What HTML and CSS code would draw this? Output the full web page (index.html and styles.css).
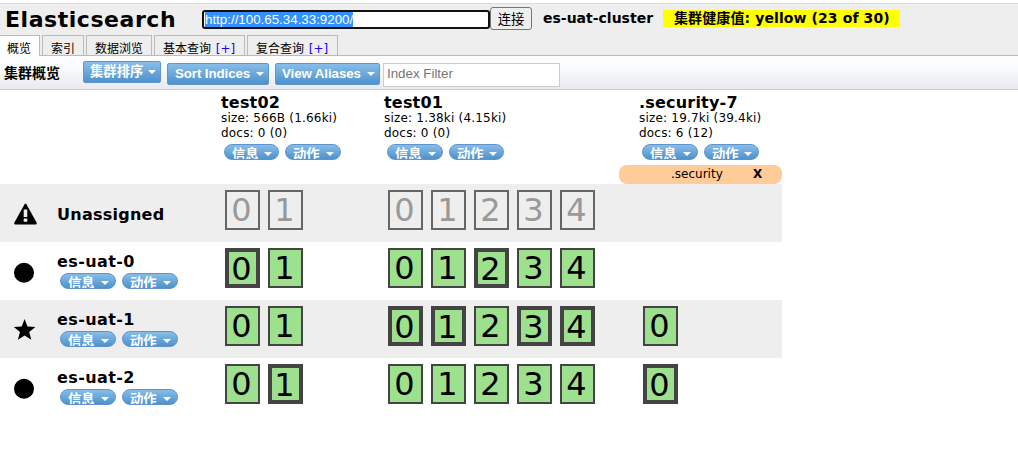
FILE: index.html
```html
<!DOCTYPE html>
<html lang="zh">
<head>
<meta charset="utf-8">
<title>Elasticsearch</title>
<link rel="stylesheet" href="styles.css">
</head>
<body>
<header class="header">
  <div class="top">
    <h1 class="title">Elasticsearch</h1>
    <div class="uri"><span class="selected">http://100.65.34.33:9200/</span></div>
    <button class="connect">连接</button>
    <span class="cluster">es-uat-cluster</span>
    <span class="health">集群健康值: yellow (23 of 30)</span>
  </div>
  <nav class="tabs">
    <div class="tab active w40">概览</div>
    <div class="tab w42">索引</div>
    <div class="tab w66">数据浏览</div>
    <div class="tab w91">基本查询 <span class="add">[+]</span></div>
    <div class="tab w91">复合查询 <span class="add">[+]</span></div>
  </nav>
</header>
<div class="toolbar">
  <span class="heading">集群概览</span>
  <button class="btn sort">集群排序<i class="arrow"></i></button>
  <button class="btn indices">Sort Indices<i class="arrow"></i></button>
  <button class="btn aliases">View Aliases<i class="arrow"></i></button>
  <input class="filter" placeholder="Index Filter">
</div>
<main class="grid">
  <div class="row heads">
    <div class="node"></div>
    <div class="index a"><h2>test02</h2><p>size: 566B (1.66ki)</p><p>docs: 0 (0)</p>
      <div class="pills"><span class="pill narrow">信息<i class="arrow"></i></span><span class="pill">动作<i class="arrow"></i></span></div></div>
    <div class="index b"><h2>test01</h2><p>size: 1.38ki (4.15ki)</p><p>docs: 0 (0)</p>
      <div class="pills"><span class="pill">信息<i class="arrow"></i></span><span class="pill narrow">动作<i class="arrow"></i></span></div></div>
    <div class="index c"><h2>.security-7</h2><p>size: 19.7ki (39.4ki)</p><p>docs: 6 (12)</p>
      <div class="pills"><span class="pill">信息<i class="arrow"></i></span><span class="pill narrow">动作<i class="arrow"></i></span></div>
      <div class="alias"><span>.security</span><b>X</b></div></div>
  </div>
  <div class="row shade">
    <div class="node"><svg class="icon" viewBox="0 0 24 24"><path d="M11.6 1.2Q12.5 -.2 13.4 1.2L23.6 19.6Q24.2 21.6 22.6 21.6H2.4Q.8 21.6 1.4 19.6Z"/><path class="cut" d="M10.7 6.5h3.6v7.4h-3.6zM10.7 15.6h3.6v3.2h-3.6z"/></svg><div class="name">Unassigned</div></div>
    <div class="shards a"><b class="shard un">0</b><b class="shard un">1</b></div>
    <div class="shards b"><b class="shard un">0</b><b class="shard un">1</b><b class="shard un">2</b><b class="shard un">3</b><b class="shard un">4</b></div>
    <div class="shards c"></div>
  </div>
  <div class="row">
    <div class="node"><svg class="icon" viewBox="0 0 24 24"><circle cx="11" cy="11.8" r="10"/></svg>
      <div class="info"><div class="name">es-uat-0</div><div class="pills"><span class="pill">信息<i class="arrow"></i></span><span class="pill">动作<i class="arrow"></i></span></div></div></div>
    <div class="shards a"><b class="shard primary">0</b><b class="shard">1</b></div>
    <div class="shards b"><b class="shard">0</b><b class="shard">1</b><b class="shard primary">2</b><b class="shard">3</b><b class="shard">4</b></div>
    <div class="shards c"></div>
  </div>
  <div class="row shade">
    <div class="node"><svg class="icon" viewBox="0 0 24 24"><path d="M11.6 0 14.5 7.4 22.4 8 16.2 13 18.3 20.7 11.6 16.4 4.9 20.7 7 13 .8 8 8.7 7.4Z"/></svg>
      <div class="info"><div class="name">es-uat-1</div><div class="pills"><span class="pill">信息<i class="arrow"></i></span><span class="pill">动作<i class="arrow"></i></span></div></div></div>
    <div class="shards a"><b class="shard">0</b><b class="shard">1</b></div>
    <div class="shards b"><b class="shard primary">0</b><b class="shard primary">1</b><b class="shard">2</b><b class="shard primary">3</b><b class="shard primary">4</b></div>
    <div class="shards c"><b class="shard">0</b></div>
  </div>
  <div class="row">
    <div class="node"><svg class="icon" viewBox="0 0 24 24"><circle cx="11" cy="11.8" r="10"/></svg>
      <div class="info"><div class="name">es-uat-2</div><div class="pills"><span class="pill">信息<i class="arrow"></i></span><span class="pill">动作<i class="arrow"></i></span></div></div></div>
    <div class="shards a"><b class="shard">0</b><b class="shard primary">1</b></div>
    <div class="shards b"><b class="shard">0</b><b class="shard">1</b><b class="shard">2</b><b class="shard">3</b><b class="shard">4</b></div>
    <div class="shards c"><b class="shard primary">0</b></div>
  </div>
</main>
</body>
</html>
```
FILE: styles.css
```css
* { box-sizing: border-box; }
body { margin: 0; padding-top: 3px; background: #fff; color: #000; font: 12px/15px "DejaVu Sans", "Noto Sans CJK SC", sans-serif; overflow: hidden; white-space: nowrap; }
h1, h2, p { margin: 0; }
button { font: inherit; padding: 0; }
.header { height: 53px; background: #eee; border-top: 1px solid #ddd; border-bottom: 1px solid #bbb; }
.top { display: flex; align-items: flex-start; height: 31px; }
.title { width: 202px; padding-left: 5px; font-size: 22px; line-height: 31px; letter-spacing: .55px; }
.uri { width: 288px; height: 19px; margin-top: 6px; padding-left: 1px; border: 2px solid #101010; border-radius: 3px; background: #fff; font: 13.33px/15px "Liberation Sans", Arial, sans-serif; }
.selected { display: inline-block; height: 15px; background: #3390ff; color: #fff; }
.connect { width: 42px; height: 23px; margin-top: 3px; border: 1px solid #767676; border-radius: 3px; background: #efefef; color: #000; font-size: 13.33px; line-height: 23px; }
.cluster, .health { flex: none; height: 17px; margin-top: 6px; font-size: 14px; line-height: 17px; font-weight: bold; }
.cluster { width: 120px; margin-left: 11px; }
.health { width: 237px; padding-left: 11px; background: #ff0; letter-spacing: .1px; }
.tabs { display: flex; gap: 2px; height: 21px; }
.tab { height: 20px; padding: 4px 0 0 8px; border: 1px solid #bbb; border-bottom: 0; line-height: 18px; overflow: hidden; }
.tab.active { height: 21px; padding-left: 7px; border-left: 0; background: #fff; }
.w40 { width: 40px; }
.w42 { width: 42px; }
.w66 { width: 66px; }
.w91 { width: 91px; }
.add { margin-left: 1px; color: #20f; }
.toolbar { display: flex; height: 34px; padding: 5px 0 0 4px; border-bottom: 1px solid #ccc; background: linear-gradient(#fffdfe, #f8fcfe 35%, #f5f5f5 55%, #e9eaf1); }
.heading { width: 79px; font-size: 14px; line-height: 25px; font-weight: bold; }
.btn { display: flex; align-items: center; justify-content: space-between; height: 22px; padding: 0 4px 0 7px; border: 1px solid #6096cd; border-radius: 2px; background: linear-gradient(#88bde8, #4e92cc); color: #fff; font: bold 13.33px/20px "Liberation Sans", "Noto Sans CJK SC", sans-serif; letter-spacing: -.1px; }
.sort { width: 78px; padding-left: 6px; line-height: 22px; letter-spacing: 0; }
.indices { width: 102px; margin: 2px 0 0 6px; }
.aliases { width: 105px; margin: 2px 0 0 6px; padding-left: 6px; }
.arrow { width: 0; height: 0; border: 4px solid transparent; border-top-color: #fff; border-bottom: 0; }
.filter { width: 177px; height: 24px; margin: 2px 0 0 3px; padding: 0 3px 3px; border: 1px solid #ccc; background: #fff; font: 13.33px "Liberation Sans", sans-serif; }
.filter::placeholder { color: #757575; }
.grid { width: 782px; }
.row { display: flex; height: 58px; }
.row.heads { height: 94px; }
.shade { background: #eee; }
.node { display: flex; width: 221px; padding-left: 13px; }
.row:not(.heads) .node { align-items: center; }
.icon { flex: none; width: 24px; height: 24px; margin-top: 3px; }
.cut { fill: #eee; }
.name { font-size: 16px; line-height: 18px; font-weight: bold; letter-spacing: .25px; }
.info .name { letter-spacing: .4px; }
.icon + .name { margin: 3px 0 0 20px; }
.info { align-self: flex-start; padding: 11px 0 0 20px; }
.info .pills { margin-top: 2px; }
.index { padding-top: 4px; }
.index p { letter-spacing: .2px; }
.a { width: 163px; }
.b { width: 255px; }
.c { width: 143px; }
.index h2 { font-size: 16px; line-height: 17px; letter-spacing: .2px; }
.pills { display: flex; gap: 6px; padding-left: 3px; }
.index .pills { margin-top: 3px; }
.pill { display: flex; width: 56px; height: 16px; padding: 2px 6px 0 7px; justify-content: space-between; border: 1px solid #5f93cc; border-radius: 8px; background: linear-gradient(#88bde8, #4e92cc); color: #fff; font: bold 13.33px/16px "Liberation Sans", "Noto Sans CJK SC", sans-serif; overflow: hidden; }
.pill.narrow { width: 55px; }
.pill .arrow { margin-top: 5px; }
.alias { display: flex; width: 163px; height: 19px; margin: 5px 0 0 -20px; padding-left: 52px; border-radius: 8px; background: #fc9; line-height: 19px; }
.alias span { width: 82px; }
.shards { display: flex; gap: 8px; padding: 6px 0 0 4px; }
.shard { width: 35px; height: 40px; border: 2px solid #444; background: #9de08d; font-size: 32px; line-height: 36px; font-weight: normal; text-align: center; padding-right: 2px; }
.primary { border-width: 4px; line-height: 34px; }
.un { border-color: #666; background: #eee; color: #999; }
```
